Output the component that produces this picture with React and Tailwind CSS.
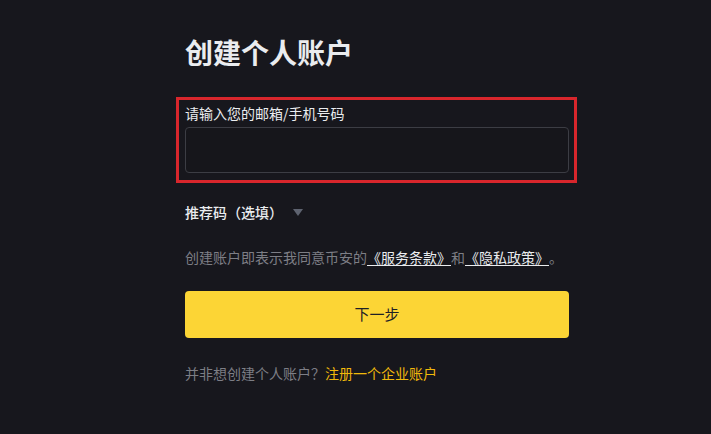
export default function App() {
  return (
    <div className="min-h-screen w-full bg-[#17171d] pl-[185px] pt-[34px]">
      <div className="flex w-[384px] flex-col font-['Noto_Sans_CJK_SC',_'Noto_Sans',_sans-serif] [text-spacing-trim:space-all]">
        {/* title */}
        <h1 className="h-9 text-[28px] font-bold leading-9 text-[#eaecef]">
          创建个人账户
        </h1>

        {/* email / phone field (boxed in red) */}
        <div className="-ml-[9px] mt-[27px] flex w-[401px] flex-col border-[3px] border-[#d8262c] pl-[6px] pr-[5px] pt-[3px] pb-[7px]">
          <label className="h-5 text-[14px] leading-5 text-[#eaecef]">
            请输入您的邮箱/手机号码
          </label>
          <input
            type="text"
            className="mt-1 h-[46px] w-full rounded-[4px] border border-[#3c3d44] bg-[#16161b] px-3 text-[14px] text-[#eaecef] outline-none"
          />
        </div>

        {/* referral */}
        <div className="mt-[19px] flex h-5 items-center gap-[10px]">
          <span className="text-[14px] font-medium leading-5 text-[#eaecef]">
            推荐码（选填）
          </span>
          <svg width="10" height="7" viewBox="0 0 10 7" className="mt-px">
            <path d="M0 0h10L5 7z" fill="#5e6370" />
          </svg>
        </div>

        {/* terms */}
        <p className="mt-[25px] h-5 whitespace-nowrap text-[14px] leading-5 text-[#7d7e85]">
          创建账户即表示我同意币安的
          <a className="text-[#eaecef] underline underline-offset-2">《服务条款》</a>
          和
          <a className="text-[#eaecef] underline underline-offset-2">《隐私政策》</a>
          。
        </p>

        {/* next */}
        <button className="mt-[24px] h-[47px] w-full rounded-[4px] bg-[#fcd535] text-[15px] text-[#1e2026]">
          下一步
        </button>

        {/* business */}
        <p className="mt-[25px] h-5 text-[14px] leading-5 text-[#7d7e85]">
          并非想创建个人账户？
          <a className="text-[#f0b90b]">注册一个企业账户</a>
        </p>
      </div>
    </div>
  );
}
